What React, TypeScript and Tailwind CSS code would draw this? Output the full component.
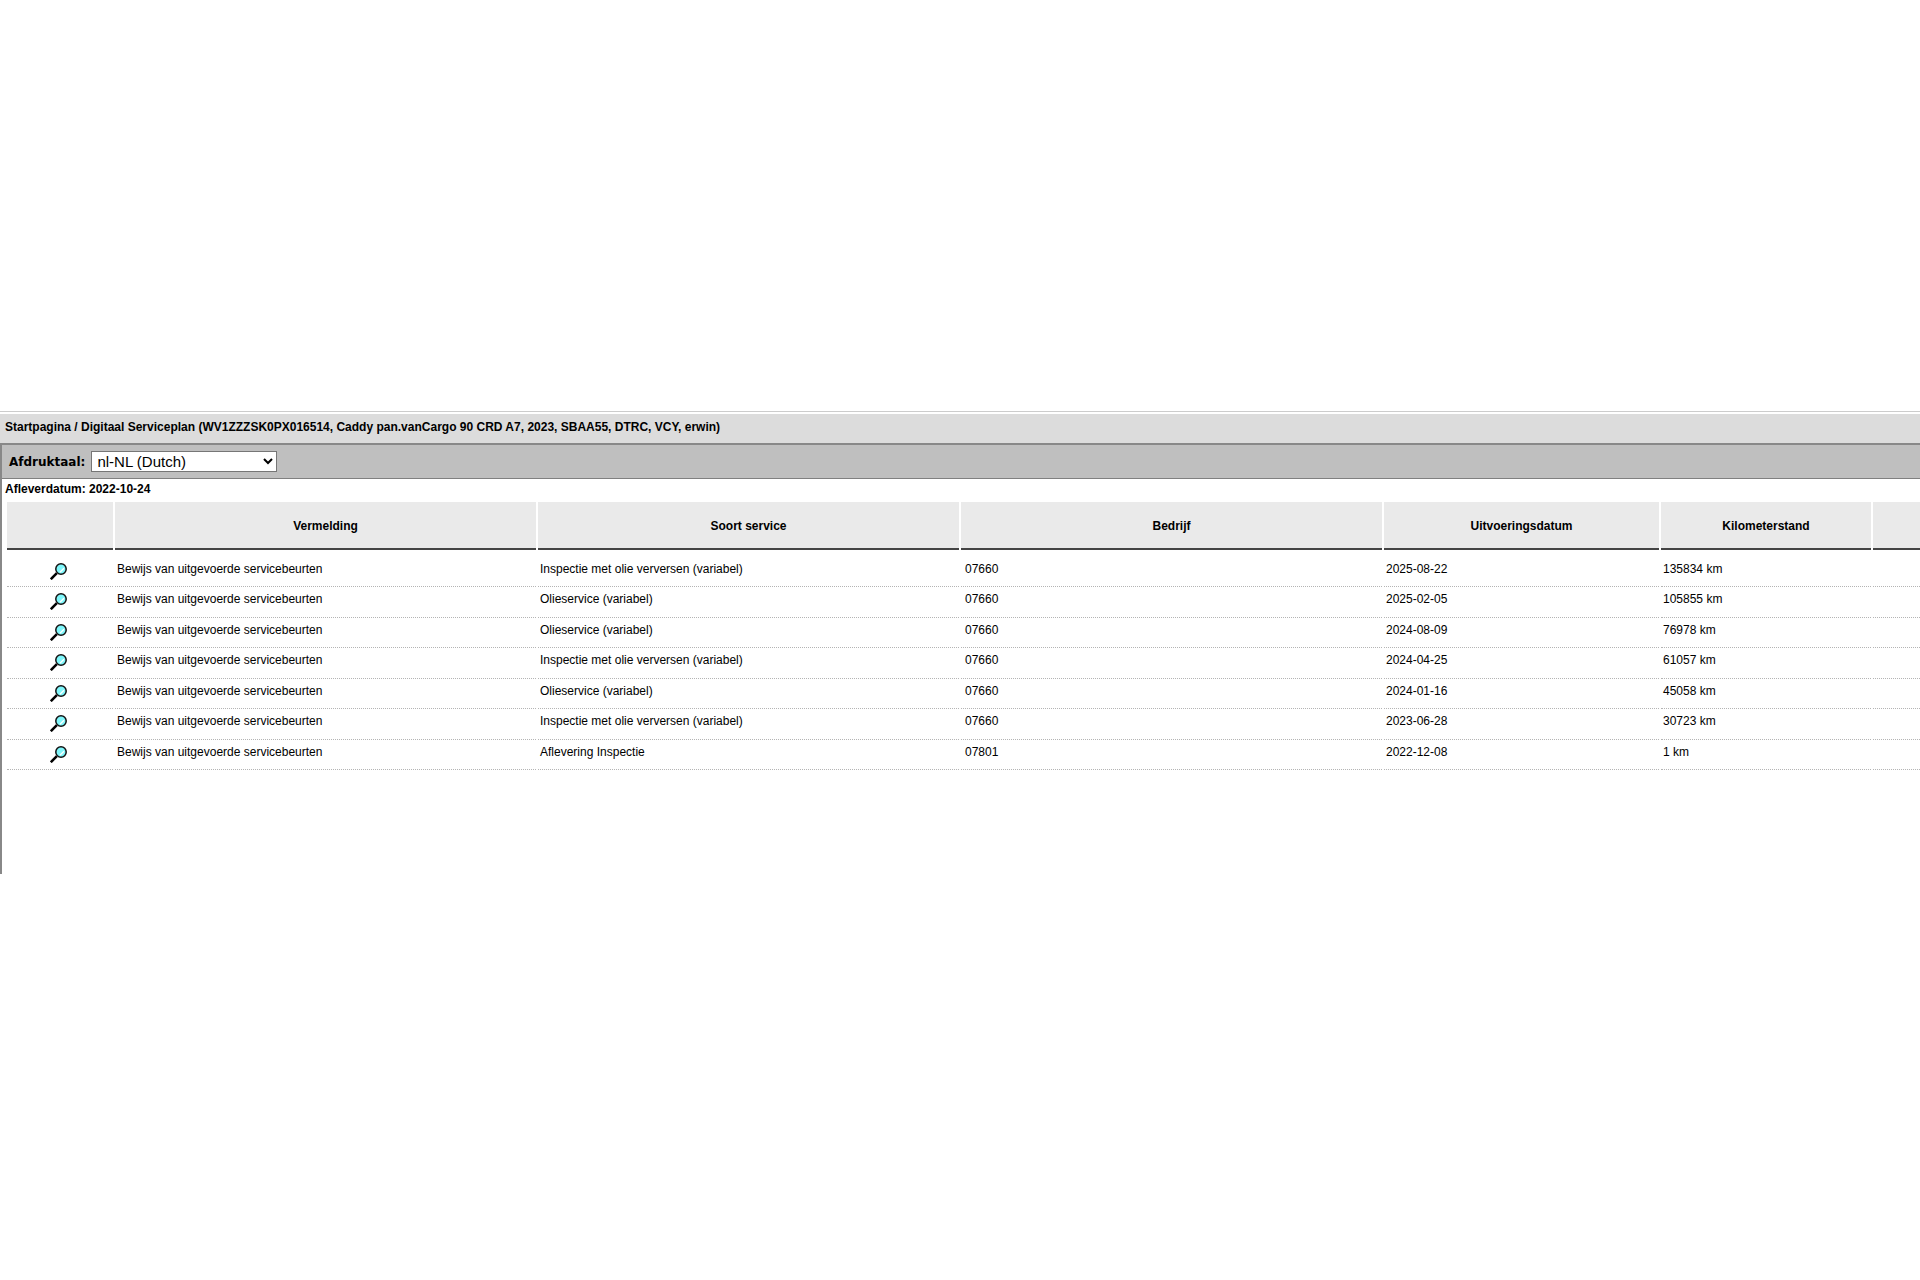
import { useState } from "react";

const languages = ["nl-NL (Dutch)", "en-GB (English)", "de-DE (German)"];

// columns without a width share what is left
const columns = [
  { title: "", width: "w-[106px]" },
  { title: "Vermelding", width: "" },
  { title: "Soort service", width: "" },
  { title: "Bedrijf", width: "" },
  { title: "Uitvoeringsdatum", width: "w-[275px]" },
  { title: "Kilometerstand", width: "w-[210px]" },
  { title: "", width: "w-[47px]" },
];

const services = [
  { type: "Inspectie met olie verversen (variabel)", dealer: "07660", date: "2025-08-22", km: "135834 km" },
  { type: "Olieservice (variabel)", dealer: "07660", date: "2025-02-05", km: "105855 km" },
  { type: "Olieservice (variabel)", dealer: "07660", date: "2024-08-09", km: "76978 km" },
  { type: "Inspectie met olie verversen (variabel)", dealer: "07660", date: "2024-04-25", km: "61057 km" },
  { type: "Olieservice (variabel)", dealer: "07660", date: "2024-01-16", km: "45058 km" },
  { type: "Inspectie met olie verversen (variabel)", dealer: "07660", date: "2023-06-28", km: "30723 km" },
  { type: "Aflevering Inspectie", dealer: "07801", date: "2022-12-08", km: "1 km" },
];

const MagnifierIcon = () => (
  <svg width="17" height="17" viewBox="0 0 17 17" aria-hidden="true">
    <path d="M0.8 16.2L6.8 10.2" stroke="#000" strokeWidth="2.6" />
    <circle cx="11" cy="6" r="5.2" fill="#7ff6fa" stroke="#111" strokeWidth="1.5" />
    <path d="M10 9.2L14 5.2" stroke="#fff" strokeWidth="1.3" />
  </svg>
);

const ServiceTable = () => (
  <table className="w-[calc(100%+2px)] table-fixed border-separate border-spacing-x-[2px] border-spacing-y-0">
    <thead>
      <tr>
        {columns.map((column, index) => (
          <th
            key={index}
            scope="col"
            className={`${column.width} h-12 border-b-2 border-[#444] bg-[#eaeaea] px-0 pt-[2px] pb-0 font-bold`}
          >
            {column.title}
          </th>
        ))}
      </tr>
    </thead>
    <tbody className="before:block before:h-[7px] before:content-[''] [&_td]:border-b [&_td]:border-dotted [&_td]:border-[#b4b4b4] [&_td]:align-top">
      {services.map((service) => (
        <tr key={service.date} className="odd:h-[30px] even:h-[31px]">
          <td className="pt-[6px] pr-[3px]">
            <button className="mx-auto block" aria-label={`Details ${service.date}`}>
              <MagnifierIcon />
            </button>
          </td>
          <td className="px-[2px] pt-1">Bewijs van uitgevoerde servicebeurten</td>
          <td className="px-[2px] pt-1">{service.type}</td>
          <td className="px-1 pt-1">{service.dealer}</td>
          <td className="px-[2px] pt-1">{service.date}</td>
          <td className="px-[2px] pt-1">{service.km}</td>
          <td></td>
        </tr>
      ))}
    </tbody>
  </table>
);

const App = () => {
  const [language, setLanguage] = useState(languages[0]);
  return (
    <div className="min-h-screen overflow-hidden bg-white pt-[411px] font-['Liberation_Sans',Arial,sans-serif] text-[12px] leading-4 text-black">
      <header className="border-t border-[#ccc] pt-[2px]">
        <h1 className="h-[29px] bg-[#dcdcdc] px-[5px] pt-[5px] text-[12px] font-bold">
          Startpagina / Digitaal Serviceplan (WV1ZZZSK0PX016514, Caddy pan.vanCargo 90 CRD A7, 2023, SBAA55, DTRC, VCY,
          erwin)
        </h1>
      </header>
      <main className="min-h-[431px] border-t-2 border-l-2 border-[#888]">
        <div className="flex h-[34px] items-center gap-[6px] border-b border-[#808080] bg-[#bfbfbf] pl-[7px]">
          <label htmlFor="language" className="font-['DejaVu_Sans',Verdana,sans-serif] font-bold">
            Afdruktaal:
          </label>
          <select
            id="language"
            value={language}
            onChange={(e) => setLanguage(e.target.value)}
            className="h-[21px] w-[186px] border border-[#767676] bg-white pl-px text-[15px] leading-4 text-black"
          >
            {languages.map((item) => (
              <option key={item}>{item}</option>
            ))}
          </select>
        </div>
        <p className="h-[23px] pt-[2px] pl-[3px] font-bold">Afleverdatum: 2022-10-24</p>
        <div className="pl-[3px]">
          <ServiceTable />
        </div>
      </main>
    </div>
  );
};

export default App;
